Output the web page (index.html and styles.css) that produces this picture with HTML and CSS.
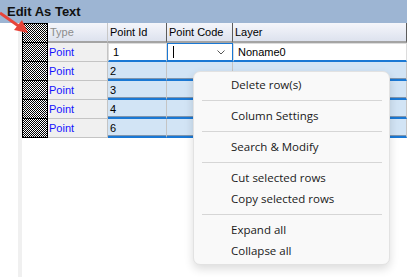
FILE: index.html
```html
<!DOCTYPE html>
<html lang="en">
<head>
  <meta charset="UTF-8">
  <title>Edit As Text</title>
  <link rel="stylesheet" href="styles.css">
</head>
<body>
  <div class="titlebar">Edit As Text</div>
  <div class="main">
    <div class="gutter"></div>
    <div class="grid">
      <div class="row head">
        <div class="rh"></div>
        <div class="hc muted">Type</div>
        <div class="hc">Point Id</div>
        <div class="hc">Point Code</div>
        <div class="hc">Layer</div>
      </div>
      <div class="row current">
        <div class="rh"></div>
        <div class="tc">Point</div>
        <div class="dc">1</div>
        <div class="dc combo">
          <span class="caret"></span>
          <svg class="chev" width="8" height="5" viewBox="0 0 8 5"><polyline points="0.5,0.5 4,4 7.5,0.5" fill="none" stroke="#555" stroke-width="1"/></svg>
        </div>
        <div class="dc">Noname0</div>
      </div>
      <div class="row sel">
        <div class="rh"></div>
        <div class="tc">Point</div>
        <div class="dc">2</div>
        <div class="dc"></div>
        <div class="dc"></div>
      </div>
      <div class="row sel">
        <div class="rh"></div>
        <div class="tc">Point</div>
        <div class="dc">3</div>
        <div class="dc"></div>
        <div class="dc"></div>
      </div>
      <div class="row sel">
        <div class="rh"></div>
        <div class="tc">Point</div>
        <div class="dc">4</div>
        <div class="dc"></div>
        <div class="dc"></div>
      </div>
      <div class="row sel">
        <div class="rh"></div>
        <div class="tc">Point</div>
        <div class="dc">6</div>
        <div class="dc"></div>
        <div class="dc"></div>
      </div>
    </div>
  </div>

  <!-- annotation arrow -->
  <svg class="arrow" width="32" height="36" viewBox="0 0 32 36">
    <line x1="0" y1="13" x2="20" y2="27" stroke="#e8443a" stroke-width="3"/>
    <polygon points="28,33 14,30 22,20" fill="#e8443a"/>
  </svg>

  <div class="menu">
    <div class="item">Delete row(s)</div>
    <div class="sep"></div>
    <div class="item">Column Settings</div>
    <div class="sep"></div>
    <div class="item">Search &amp; Modify</div>
    <div class="sep"></div>
    <div class="item">Cut selected rows</div>
    <div class="item">Copy selected rows</div>
    <div class="sep"></div>
    <div class="item">Expand all</div>
    <div class="item">Collapse all</div>
  </div>
</body>
</html>
```

FILE: styles.css
```css
body {
  margin: 0;
  background: #fff;
  font-family: "Liberation Sans", Arial, sans-serif;
  font-size: 11px;
  color: #000;
  height: 277px;
  overflow: hidden;
}

/*===============================
Title + grid
=============*/

.titlebar {
  height: 23px;
  line-height: 23px;
  padding-left: 7px;
  background: #9db5d3;
  font-weight: bold;
  font-size: 13px;
  color: #111;
}

.main {
  display: flex;
  height: 254px;
}

.gutter {
  width: 18px;
  border-right: 4px solid #f0f0f0;
}

.grid {
  flex: 1;
}

.row {
  display: grid;
  grid-template-columns: 26px 60px 59px 66px 1fr;
  height: 19px;
}

.rh {
  box-sizing: border-box;
  border: 1px solid #000;
  border-top: none;
  background: repeating-conic-gradient(#000 0 25%, #fff 0 50%) 0 0 / 2px 2px;
}

.head {
  height: 20px;
}

.head .rh {
  border-top: 1px solid #000;
}

.hc {
  box-sizing: border-box;
  padding: 3px 0 0 2px;
  background: linear-gradient(#f5f6fb, #dde2ee);
  border-right: 1px solid #5c5c5c;
  border-bottom: 2px solid #a4a4a4;
  white-space: nowrap;
}

.hc.muted {
  color: #8c8c8c;
  border-right-color: #c8c8c8;
}

.tc {
  box-sizing: border-box;
  padding: 3px 0 0 1px;
  background: #f0f0f0;
  color: #1414ff;
  border-right: 1px solid #c4c4c4;
  border-bottom: 1px solid #c4c4c4;
}

.dc {
  box-sizing: border-box;
  padding: 3px 0 0 2px;
  border-right: 1px solid #c4c4c4;
}

.current .dc {
  background: #fff;
  border: 1px solid #dcdcdc;
  border-bottom: 2px solid #1a78d4;
  padding: 2px 0 0 4px;
}

.current .combo {
  position: relative;
  border: 1px solid #1a78d4;
  border-bottom: 2px solid #1a78d4;
}

.caret {
  position: absolute;
  left: 5px;
  top: 2px;
  width: 1px;
  height: 12px;
  background: #000;
}

.chev {
  position: absolute;
  right: 7px;
  top: 6px;
}

.sel .dc {
  background: #d2e4f5;
  border-bottom: 2px solid #1a78d4;
  box-shadow: inset 0 -1px 0 #7f95ad;
}

.arrow {
  position: absolute;
  left: 0;
  top: 0;
}

/*===============================
Context menu
=============*/

.menu {
  position: absolute;
  left: 193px;
  top: 71px;
  width: 197px;
  box-sizing: border-box;
  padding: 2px 0 3px;
  background: #f9f9f9;
  border: 1px solid #e2e2e2;
  border-radius: 7px;
  box-shadow: 0 4px 10px rgba(0, 0, 0, 0.14);
  font-family: "Open Sans", sans-serif;
  font-size: 11.5px;
  color: #1a1a1a;
}

.item {
  height: 21px;
  line-height: 21px;
  padding-left: 37px;
}

.sep {
  height: 1px;
  margin: 5px 7px 4px 8px;
  background: #d6d6d6;
}
```
